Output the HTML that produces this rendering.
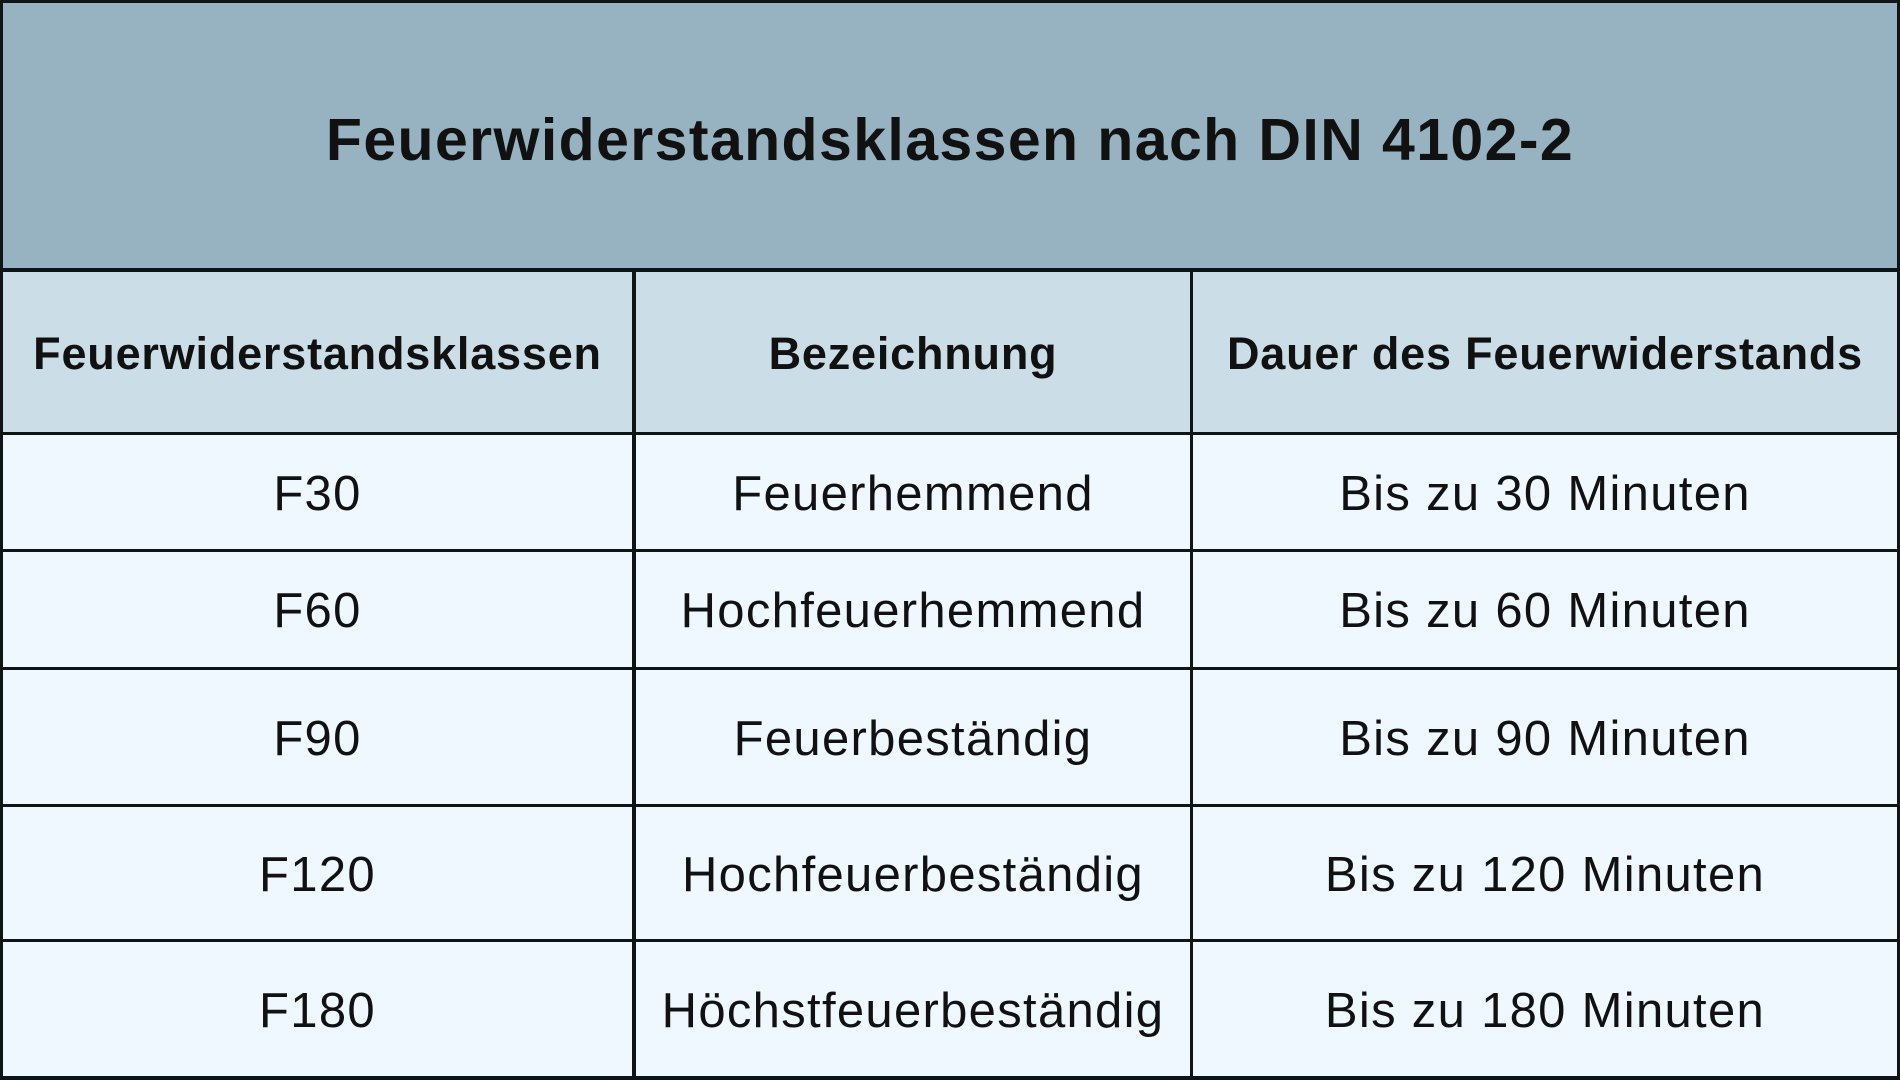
<!DOCTYPE html>
<html><head><meta charset="utf-8"><style>
*{margin:0;padding:0;box-sizing:border-box}
body{width:1900px;height:1080px;background:#0f1417;position:relative;overflow:hidden;font-family:"Liberation Sans",sans-serif;color:#111}
.r{position:absolute;display:flex;align-items:center;justify-content:center;text-align:center;white-space:nowrap}
.h{font-weight:bold;font-size:45px;letter-spacing:0.8px;padding-top:3px}
.b{font-size:49px;letter-spacing:1.3px;padding-top:3px}
</style></head><body>
<div class="r" style="left:3px;top:3px;width:1894px;height:265px;background:#97b2c1;font-weight:bold;font-size:59px;letter-spacing:1.4px;padding-top:8px">Feuerwiderstandsklassen nach DIN 4102-2</div>
<div class="r h" style="left:3px;top:272px;width:629px;height:160px;background:#cbdde6">Feuerwiderstandsklassen</div>
<div class="r h" style="left:636px;top:272px;width:554px;height:160px;background:#cbdde6">Bezeichnung</div>
<div class="r h" style="left:1193px;top:272px;width:704px;height:160px;background:#cbdde6">Dauer des Feuerwiderstands</div>

<div class="r b" style="left:3px;top:435px;width:629px;height:114px;background:#eef8fe">F30</div>
<div class="r b" style="left:636px;top:435px;width:554px;height:114px;background:#eef8fe">Feuerhemmend</div>
<div class="r b" style="left:1193px;top:435px;width:704px;height:114px;background:#eef8fe">Bis zu 30 Minuten</div>

<div class="r b" style="left:3px;top:552px;width:629px;height:115px;background:#eef8fe">F60</div>
<div class="r b" style="left:636px;top:552px;width:554px;height:115px;background:#eef8fe">Hochfeuerhemmend</div>
<div class="r b" style="left:1193px;top:552px;width:704px;height:115px;background:#eef8fe">Bis zu 60 Minuten</div>

<div class="r b" style="left:3px;top:670px;width:629px;height:134px;background:#eef8fe">F90</div>
<div class="r b" style="left:636px;top:670px;width:554px;height:134px;background:#eef8fe">Feuerbeständig</div>
<div class="r b" style="left:1193px;top:670px;width:704px;height:134px;background:#eef8fe">Bis zu 90 Minuten</div>

<div class="r b" style="left:3px;top:807px;width:629px;height:132px;background:#eef8fe">F120</div>
<div class="r b" style="left:636px;top:807px;width:554px;height:132px;background:#eef8fe">Hochfeuerbeständig</div>
<div class="r b" style="left:1193px;top:807px;width:704px;height:132px;background:#eef8fe">Bis zu 120 Minuten</div>

<div class="r b" style="left:3px;top:942px;width:629px;height:134px;background:#eef8fe">F180</div>
<div class="r b" style="left:636px;top:942px;width:554px;height:134px;background:#eef8fe">Höchstfeuerbeständig</div>
<div class="r b" style="left:1193px;top:942px;width:704px;height:134px;background:#eef8fe">Bis zu 180 Minuten</div>
</body></html>
